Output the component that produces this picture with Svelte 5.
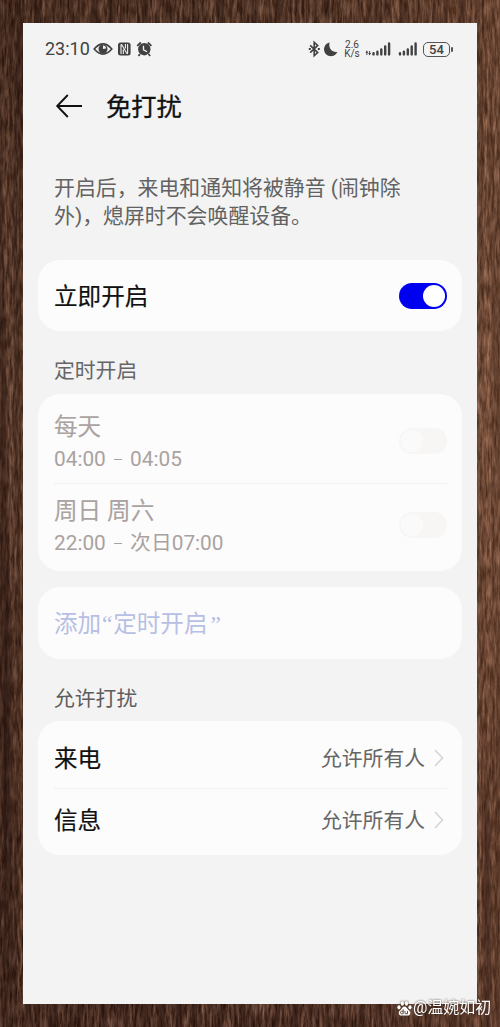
<script>
  const schedules = [
    { title: '每天', start: '04:00', end: '04:05' },
    { title: '周日 周六', start: '22:00', end: '次日07:00' }
  ];
  const allowed = [
    { title: '来电', value: '允许所有人' },
    { title: '信息', value: '允许所有人' }
  ];
</script>

<div class="desk">
  <svg class="wood" width="500" height="1027" aria-hidden="true">
    <defs>
      <linearGradient id="tone" x1="0" y1="0" x2="0" y2="1">
        <stop offset="0" stop-color="#573a29" />
        <stop offset=".4" stop-color="#7a5540" />
        <stop offset=".7" stop-color="#684331" />
        <stop offset="1" stop-color="#482c22" />
      </linearGradient>
      <linearGradient id="side" x1="0" y1="0" x2="1" y2="0">
        <stop offset="0" stop-color="#20100a" stop-opacity=".24" />
        <stop offset=".5" stop-color="#20100a" stop-opacity=".08" />
        <stop offset="1" stop-color="#b97b55" stop-opacity=".16" />
      </linearGradient>
      <filter id="grain" x="0" y="0" width="100%" height="100%" color-interpolation-filters="sRGB">
        <feTurbulence type="fractalNoise" baseFrequency=".4 .06" numOctaves="4" seed="8" />
        <feColorMatrix values="1.1 0 0 0 -.16  .9 0 0 0 -.19  .8 0 0 0 -.2  0 0 0 0 .55" />
      </filter>
      <filter id="bands" x="0" y="0" width="100%" height="100%" color-interpolation-filters="sRGB">
        <feTurbulence type="fractalNoise" baseFrequency=".12 .002" numOctaves="3" seed="3" />
        <feColorMatrix values="0 0 0 0 .14  0 0 0 0 .07  0 0 0 0 .05  1.6 0 0 0 -.6" />
      </filter>
    </defs>
    <rect width="500" height="1027" fill="url(#tone)" />
    <rect width="500" height="1027" filter="url(#grain)" />
    <rect width="500" height="1027" filter="url(#bands)" />
    <rect width="500" height="1027" fill="url(#side)" />
  </svg>

  <main class="screen">
    <div class="status">
      <span class="clock">23:10</span>
      <svg class="left-icons" width="62" height="18" viewBox="0 0 62 18">
        <path d="M1.2 9Q10-1.2 18.8 9Q10 19.2 1.2 9Z" fill="none" stroke="#414141" stroke-width="1.7" />
        <circle cx="10" cy="9" r="4.5" fill="#414141" />
        <path d="M10 5.4a3.2 3.2 0 0 1 3 3.2l-3 .3Z" fill="#f3f3f3" />
        <rect x="25" y="2.4" width="12.6" height="13.2" rx="2.5" fill="#414141" />
        <path d="M28 14V5.3q0-1.500 1.200.2l4.200 7.300q1.200 1.500 1.200 0V4M30.300 14V9.500M32.400 4v4.500" fill="none" stroke="#f3f3f3" stroke-width="1.100" />
        <circle cx="51.300" cy="9.200" r="6.200" fill="#414141" />
        <path d="M44.200 5.800l3.600-3.300M58.400 5.800l-3.600-3.300M47 14l-1.500 2M55.600 14l1.500 2" stroke="#414141" stroke-width="1.800" />
        <path d="M50.500 5.700v4.100l3.600 2" fill="none" stroke="#f3f3f3" stroke-width="1.300" />
      </svg>
      <svg class="bt" width="32" height="18" viewBox="0 0 32 18">
        <path d="M2.200 5.400l7.500 7.200-3.500 3.100V2.300l3.500 3.100-7.500 7.200" fill="none" stroke="#414141" stroke-width="1.600" />
        <path d="M.8 9h2M9.800 9h2" stroke="#414141" stroke-width="1.900" />
        <path d="M21.600 2.500a6.900 6.900 0 1 0 7.700 9.400C23.800 12.900 20.200 8 21.600 2.500Z" fill="#414141" />
      </svg>
      <span class="speed"><span>2.6</span><span>K/s</span></span>
      <svg class="signals" width="53" height="18" viewBox="0 0 53 18">
        <path d="M1.900 12v3M4.600 11v3" stroke="#414141" stroke-width="1" />
        <path d="M.4 12.800L1.900 10.300l1.200 2.500ZM3.200 13L4.600 15.500l1.500-2.500Z" fill="#414141" />
        <path d="M8.500 14.400v-1.300M12.400 14.400v-2.600M16.300 14.400V9.500M20.200 14.400V6.500M24.100 14.400V3.500M35 14.400v-1.300M38.900 14.400v-2.600M42.800 14.400V9.500M46.700 14.400V6.500M50.600 14.400V3.500" stroke="#414141" stroke-width="2.400" stroke-linecap="round" />
      </svg>
      <span class="battery">54</span>
    </div>

    <header>
      <svg width="28" height="26" viewBox="0 0 28 26">
        <path d="M12.800 2L2.200 13l10.600 11M2.200 13H27" fill="none" stroke="#111" stroke-width="1.900" />
      </svg>
      <h1>免打扰</h1>
    </header>

    <p class="intro">开启后，来电和通知将被静音 (闹钟除<br />外)，熄屏时不会唤醒设备。</p>

    <section class="card now">
      <span class="name">立即开启</span>
      <span class="switch on"></span>
    </section>

    <h2>定时开启</h2>
    <section class="card timers">
      {#each schedules as item}
        <div class="timer">
          <div class="words">
            <span class="name">{item.title}</span>
            <span class="time">{item.start} <i></i> {item.end}</span>
          </div>
          <span class="switch"></span>
        </div>
      {/each}
    </section>

    <section class="card add">添加<span class="open">“</span>定时开启<span class="close">”</span></section>

    <h2 class="second">允许打扰</h2>
    <section class="card people">
      {#each allowed as item}
        <div class="person">
          <span class="name">{item.title}</span>
          <span class="value">{item.value}</span>
          <svg width="10" height="18" viewBox="0 0 10 18">
            <path d="M1 1l7.500 8L1 17" fill="none" stroke="#d5d5d5" stroke-width="1.600" />
          </svg>
        </div>
      {/each}
    </section>
  </main>

  <div class="credit">
    <svg width="15" height="15" viewBox="0 0 15 15">
      <g fill="#fff">
        <ellipse cx="2" cy="6.300" rx="1.600" ry="2.100" />
        <ellipse cx="5.300" cy="2.500" rx="1.600" ry="2.200" />
        <ellipse cx="9.500" cy="2.500" rx="1.600" ry="2.200" />
        <ellipse cx="13" cy="6.300" rx="1.600" ry="2.100" />
        <path d="M7.500 5.600c2 0 2.500 2 3.800 3.100 1.600 1.300 2.400 2.300 1.800 4.200-.8 2.500-3.400 1.500-5.600 1.500s-4.800 1-5.600-1.500c-.6-1.900.2-2.900 1.800-4.200C5 7.600 5.500 5.600 7.500 5.600Z" />
      </g>
      <path d="M6.200 8.300v4.500H4.800a1.200 1.200 0 0 1 0-2.600h1.400M8 9.900v2.200q0 .7.700.7h1.800V9.900" fill="none" stroke="#55392c" stroke-width=".9" />
    </svg>
    <span>@温婉如初</span>
  </div>
</div>

<style>
  :global(body) { margin: 0; }
  .desk {
    position: relative;
    box-sizing: border-box;
    width: 500px;
    height: 1027px;
    padding: 23px;
    overflow: hidden;
    font-family: Roboto, "Noto Sans CJK SC", sans-serif;
    white-space: nowrap;
  }
  .wood { position: absolute; inset: 0; }
  .screen {
    position: relative;
    box-sizing: border-box;
    width: 454px;
    height: 981px;
    padding: 0 15px;
    background: #f3f3f3;
  }
  svg { display: block; flex: none; }
  .status {
    display: flex;
    align-items: center;
    height: 52px;
    padding-left: 7px;
    color: #414141;
  }
  .clock { width: 45px; font-size: 18px; line-height: 20px; }
  .left-icons { margin-left: 3px; }
  .bt { margin-left: 153px; }
  .speed {
    display: flex;
    flex-direction: column;
    width: 16px;
    margin-left: 4px;
    font-size: 10px;
    line-height: 9px;
    text-align: center;
  }
  .signals { margin-left: 5px; }
  .battery {
    position: relative;
    box-sizing: border-box;
    width: 27px;
    height: 15px;
    margin-left: 5px;
    border: 1px solid #555;
    border-radius: 5px;
    font-size: 13px;
    font-weight: 500;
    line-height: 13.500px;
    text-align: center;
  }
  .battery::after {
    content: "";
    position: absolute;
    right: -4px;
    top: 4px;
    width: 2px;
    height: 5px;
    border-radius: 1px;
    background: #555;
  }
  header {
    display: flex;
    align-items: center;
    height: 62px;
    padding-left: 17px;
    gap: 23px;
  }
  h1 {
    margin: 0;
    padding-top: 3px;
    color: #111;
    font-size: 25.300px;
    font-weight: 400;
    line-height: 36px;
    -webkit-text-stroke: .3px #111;
  }
  .intro {
    height: 56px;
    margin: 37px 0 30px 16px;
    color: #626262;
    font-size: 20.900px;
    line-height: 28px;
  }
  .card {
    box-sizing: border-box;
    width: 424px;
    padding: 0 15px 0 16px;
    border-radius: 22px;
    background: #fcfcfc;
  }
  .name {
    padding-top: 2px;
    color: #111;
    font-size: 23.600px;
    line-height: 34px;
    -webkit-text-stroke: .2px currentColor;
  }
  .now { display: flex; align-items: center; justify-content: space-between; height: 71px; }
  .switch {
    box-sizing: border-box;
    display: flex;
    align-items: center;
    width: 48px;
    height: 26px;
    padding: 0 2px;
    border-radius: 13px;
    background: #f7f6f5;
  }
  .switch::after { content: ""; width: 22px; height: 22px; border-radius: 50%; background: #fbfafa; }
  .switch.on { justify-content: flex-end; background: #0000f0; }
  .switch.on::after { background: #fff; }
  h2 {
    height: 30px;
    margin: 25px 0 8px 16px;
    color: #666;
    font-size: 20.800px;
    font-weight: 400;
    line-height: 30px;
  }
  .timers { height: 177px; }
  .timer { display: flex; align-items: center; justify-content: space-between; height: 89px; padding-top: 5px; box-sizing: border-box; }
  .timer + .timer { height: 82px; padding-top: 0; border-top: 1px solid #f1f1f1; }
  .words { display: flex; flex-direction: column; padding-top: 2px; }
  .timer .name { color: #aaa3a1; line-height: 32px; -webkit-text-stroke: .1px currentColor; }
  .time { color: #a9a2a0; font-size: 20.800px; line-height: 32px; }
  .time i { display: inline-block; width: 8px; height: 1px; margin: 0 3px 6px; background: #a9a2a0; vertical-align: baseline; }
  .add { height: 72px; margin-top: 16px; padding-top: 1px; color: #b8bfe4; font-size: 23.600px; line-height: 72px; }
  .open { display: inline-block; width: 12px; text-align: center; }
  .close { display: inline-block; margin-left: 3px; }
  .open, .close { font-family: "Liberation Serif", serif; line-height: 1; }
  .second { margin: 25px 0 7px 16px; color: #5d5d5d; }
  .people { height: 134px; }
  .person { display: flex; align-items: center; height: 67px; padding-top: 6px; box-sizing: border-box; }
  .person + .person { height: 63px; padding-top: 0; border-top: 1px solid #f1f1f1; }
  .value { margin-left: auto; padding-top: 2px; color: #666; font-size: 20.800px; line-height: 30px; }
  .person svg { margin: 0 3px 0 9px; }
  .credit {
    position: absolute;
    left: 397px;
    top: 998px;
    display: flex;
    align-items: center;
    gap: 1px;
    color: #fff;
    font-size: 16px;
    line-height: 20px;
    filter: drop-shadow(0 0 1px #4b352b);
  }
</style>
